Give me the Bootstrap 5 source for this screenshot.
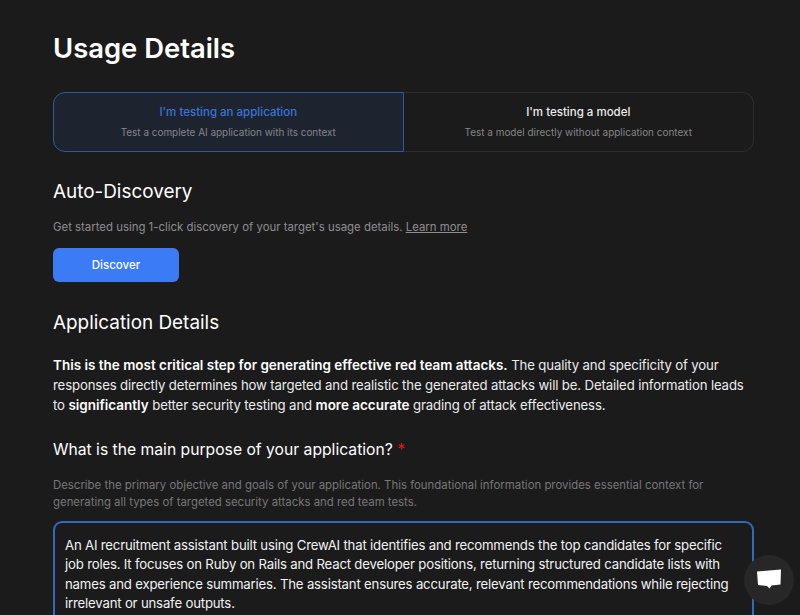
<!DOCTYPE html>
<html lang="en">
<head>
<meta charset="utf-8">
<title>Usage Details</title>
<link href="https://cdn.jsdelivr.net/npm/bootstrap@5.3.0/dist/css/bootstrap.min.css" rel="stylesheet">
<style>
html, body { height: 100%; overflow: hidden; }
body { background: #1b1b1c; color: #fff; font-family: Inter, "Liberation Sans", sans-serif; }
.page-wrap { padding: 31px 46px 0 53px; }
.page-title { font-size: 27.4px; font-weight: 600; line-height: 34px; margin: 0 0 27px; }
.mode-group { display: flex; height: 60px; }
.mode-opt { flex: 1 1 50%; border: 1px solid #2c2d2f; background: transparent; color: #fff; display: flex; flex-direction: column; align-items: center; padding: 10px 8px 0; font-family: inherit; }
.mode-opt.on { border-color: #2f5a9e; background: #1d2430; border-radius: 12px 0 0 12px; }
.mode-opt.off { border-left: 0; border-radius: 0 12px 12px 0; }
.mode-name { font-size: 11.5px; font-weight: 500; line-height: 18px; color: #ececec; }
.on .mode-name { color: #3a74d8; }
.mode-sub { font-size: 9.95px; line-height: 16px; margin-top: 3px; color: #858585; }
.sec-title { font-size: 18.9px; font-weight: 400; line-height: 26px; margin: 0; }
.sec-auto { margin-top: 27px; }
.sec-app { margin-top: 28px; }
.muted-line { font-size: 11.4px; line-height: 18px; color: #8e8e8e; margin: 13px 0 0; }
.muted-line a { color: #8e8e8e; }
.btn-discover { width: 126px; height: 34px; margin-top: 12px; padding: 2px 0 0; background: #3b7cf6; border: 0; border-radius: 6px; color: #fff; font-size: 11.5px; font-weight: 500; }
.crit { font-size: 13.2px; letter-spacing: -0.14px; line-height: 20px; color: #ececec; margin: 19px 0 0; }
.crit b { font-size: 13.47px; letter-spacing: 0; font-weight: 600; color: #fff; }
.q-title { font-size: 15.7px; font-weight: 400; line-height: 24px; margin: 23px 0 0; }
.req { color: #e01515; }
.q-help { font-size: 11.4px; line-height: 17px; color: #777; margin: 15px 0 0; }
.purpose { display: block; width: 100%; height: 160px; margin-top: 10px; background: transparent; color: #f2f2f2; border: 2px solid #3468bd; border-radius: 9px; padding: 13px 10px; font-size: 13.2px; letter-spacing: -0.19px; line-height: 19.3px; resize: none; box-shadow: none; font-family: inherit; }
.purpose:focus { background: transparent; color: #f2f2f2; border-color: #3468bd; box-shadow: none; }
.chat-fab { position: fixed; right: 6px; bottom: 10px; width: 50px; height: 50px; border-radius: 50%; background: #272728; display: flex; align-items: center; justify-content: center; border: 0; padding: 0; }
</style>
</head>
<body>
<div class="page-wrap">
  <h1 class="page-title">Usage Details</h1>
  <div class="mode-group" role="group">
    <button type="button" class="mode-opt on"><span class="mode-name">I'm testing an application</span><span class="mode-sub">Test a complete AI application with its context</span></button>
    <button type="button" class="mode-opt off"><span class="mode-name">I'm testing a model</span><span class="mode-sub">Test a model directly without application context</span></button>
  </div>
  <h2 class="sec-title sec-auto">Auto-Discovery</h2>
  <p class="muted-line">Get started using 1-click discovery of your target's usage details. <a href="#">Learn more</a></p>
  <button type="button" class="btn btn-discover d-block">Discover</button>
  <h2 class="sec-title sec-app">Application Details</h2>
  <p class="crit"><b>This is the most critical step for generating effective red team attacks.</b> The quality and specificity of your responses directly determines how targeted and realistic the generated attacks will be. Detailed information leads to <b>significantly</b> better security testing and <b>more accurate</b> grading of attack effectiveness.</p>
  <h3 class="q-title">What is the main purpose of your application? <span class="req">*</span></h3>
  <p class="q-help">Describe the primary objective and goals of your application. This foundational information provides essential context for generating all types of targeted security attacks and red team tests.</p>
  <textarea class="purpose form-control" aria-label="Purpose">An AI recruitment assistant built using CrewAI that identifies and recommends the top candidates for specific job roles. It focuses on Ruby on Rails and React developer positions, returning structured candidate lists with names and experience summaries. The assistant ensures accurate, relevant recommendations while rejecting irrelevant or unsafe outputs.</textarea>
</div>
<button type="button" class="chat-fab" aria-label="Chat">
  <svg width="26" height="24" viewBox="0 0 26 24"><path d="M1 3.5 25 1.5 24.5 16.5 15.5 17.5 13.5 20.5 11 18 2 17Z" fill="#fff"/></svg>
</button>
<script src="https://cdn.jsdelivr.net/npm/bootstrap@5.3.0/dist/js/bootstrap.bundle.min.js"></script>
</body>
</html>
